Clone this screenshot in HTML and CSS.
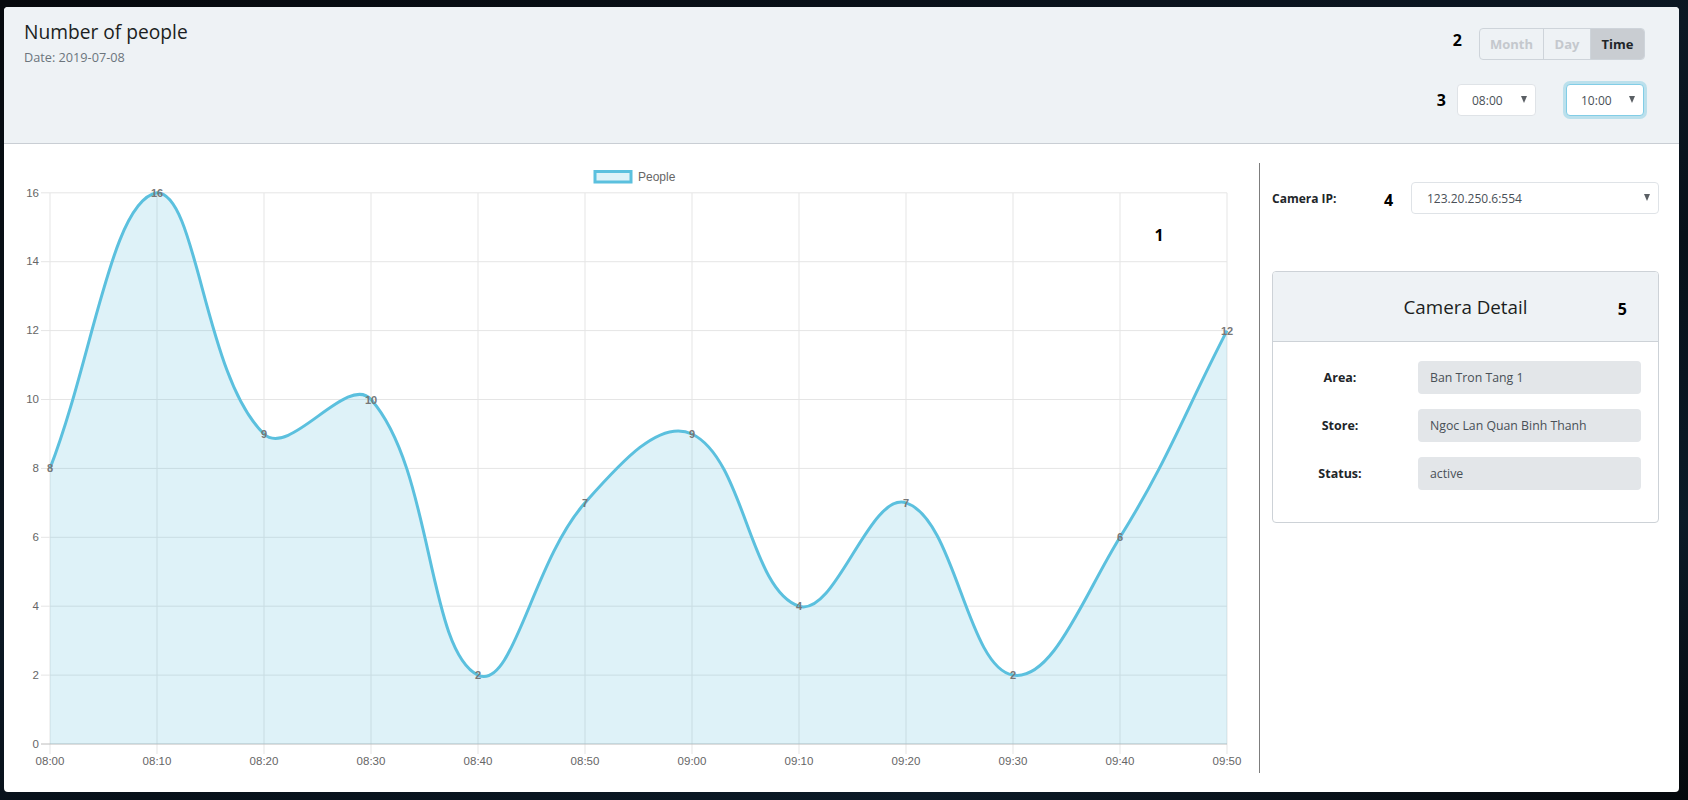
FILE: index.html
```html
<!DOCTYPE html>
<html lang="en">
<head>
<meta charset="utf-8">
<title>Number of people</title>
<link rel="stylesheet" href="styles.css">
</head>
<body>
<div class="card">
  <header class="card-header">
    <div class="title-block">
      <h1 class="title">Number of people</h1>
      <div class="date">Date: 2019-07-08</div>
    </div>
    <div class="controls">
      <div class="control-row">
        <span class="marker marker-2">2</span>
        <div class="btn-group">
          <span class="btn btn-month">Month</span>
          <span class="btn btn-day">Day</span>
          <span class="btn btn-time active">Time</span>
        </div>
      </div>
      <div class="control-row row-times">
        <span class="marker marker-3">3</span>
        <div class="select select-time">08:00<span class="caret"></span></div>
        <div class="select select-time select-focus">10:00<span class="caret"></span></div>
      </div>
    </div>
  </header>
  <div class="card-body">
    <div class="chart-col">
      <svg class="chart" width="1255" height="648" viewBox="0 0 1255 648">
        <g class="grid">
          <line x1="46" y1="48.8" x2="46" y2="610"/>
          <line x1="153" y1="48.8" x2="153" y2="610"/>
          <line x1="260" y1="48.8" x2="260" y2="610"/>
          <line x1="367" y1="48.8" x2="367" y2="610"/>
          <line x1="474" y1="48.8" x2="474" y2="610"/>
          <line x1="581" y1="48.8" x2="581" y2="610"/>
          <line x1="688" y1="48.8" x2="688" y2="610"/>
          <line x1="795" y1="48.8" x2="795" y2="610"/>
          <line x1="902" y1="48.8" x2="902" y2="610"/>
          <line x1="1009" y1="48.8" x2="1009" y2="610"/>
          <line x1="1116" y1="48.8" x2="1116" y2="610"/>
          <line x1="1223" y1="48.8" x2="1223" y2="610"/>
          <line x1="37" y1="531.1" x2="1223" y2="531.1"/>
          <line x1="37" y1="462.2" x2="1223" y2="462.2"/>
          <line x1="37" y1="393.3" x2="1223" y2="393.3"/>
          <line x1="37" y1="324.4" x2="1223" y2="324.4"/>
          <line x1="37" y1="255.5" x2="1223" y2="255.5"/>
          <line x1="37" y1="186.6" x2="1223" y2="186.6"/>
          <line x1="37" y1="117.7" x2="1223" y2="117.7"/>
          <line x1="37" y1="48.8" x2="1223" y2="48.8"/>
        </g>
        <line class="zero-line" x1="37" y1="600" x2="1223" y2="600"/>
        <g class="y-ticks">
          <text x="35" y="604">0</text>
          <text x="35" y="535">2</text>
          <text x="35" y="466">4</text>
          <text x="35" y="397">6</text>
          <text x="35" y="328">8</text>
          <text x="35" y="259">10</text>
          <text x="35" y="190">12</text>
          <text x="35" y="121">14</text>
          <text x="35" y="53">16</text>
        </g>
        <g class="x-ticks">
          <text x="46" y="621">08:00</text>
          <text x="153" y="621">08:10</text>
          <text x="260" y="621">08:20</text>
          <text x="367" y="621">08:30</text>
          <text x="474" y="621">08:40</text>
          <text x="581" y="621">08:50</text>
          <text x="688" y="621">09:00</text>
          <text x="795" y="621">09:10</text>
          <text x="902" y="621">09:20</text>
          <text x="1009" y="621">09:30</text>
          <text x="1116" y="621">09:40</text>
          <text x="1223" y="621">09:50</text>
        </g>
        <path class="area" d="M46,324.4 C88.8,214.16 107.76,56.07 153,48.8 C193.36,48.8 199.97,232.02 260,290 C285.57,314.7 343.42,228.93 367,255.5 C429.02,325.37 423.24,506.59 474,531.1 C508.84,547.93 528.42,418.09 581,358.85 C614,321.67 655,274.06 688,290 C740.58,315.39 745.63,446.32 795,462.2 C831.23,473.86 865.77,347.19 902,358.85 C951.37,374.75 962.99,523.69 1009,531.1 C1048.59,537.47 1079.32,452.35 1116,393.3 C1164.92,314.55 1180.2,269.28 1223,186.6 L1223,600 L46,600 Z"/>
        <path class="line" d="M46,324.4 C88.8,214.16 107.76,56.07 153,48.8 C193.36,48.8 199.97,232.02 260,290 C285.57,314.7 343.42,228.93 367,255.5 C429.02,325.37 423.24,506.59 474,531.1 C508.84,547.93 528.42,418.09 581,358.85 C614,321.67 655,274.06 688,290 C740.58,315.39 745.63,446.32 795,462.2 C831.23,473.86 865.77,347.19 902,358.85 C951.37,374.75 962.99,523.69 1009,531.1 C1048.59,537.47 1079.32,452.35 1116,393.3 C1164.92,314.55 1180.2,269.28 1223,186.6"/>
        <g class="data-labels">
          <text x="46" y="328.4">8</text>
          <text x="153" y="52.8">16</text>
          <text x="260" y="294">9</text>
          <text x="367" y="259.5">10</text>
          <text x="474" y="535.1">2</text>
          <text x="581" y="362.9">7</text>
          <text x="688" y="294">9</text>
          <text x="795" y="466.2">4</text>
          <text x="902" y="362.9">7</text>
          <text x="1009" y="535.1">2</text>
          <text x="1116" y="397.3">6</text>
          <text x="1223" y="190.6">12</text>
        </g>
        <g class="legend">
          <rect x="591" y="27.5" width="36" height="10.5"/>
          <text x="634" y="37">People</text>
        </g>
        <text class="marker-svg" x="1155" y="97">1</text>
      </svg>
    </div>
    <aside class="side-col">
      <div class="camera-row">
        <span class="camera-label">Camera IP:</span>
        <span class="marker marker-4">4</span>
        <div class="select select-camera">123.20.250.6:554<span class="caret"></span></div>
      </div>
      <section class="detail">
        <div class="detail-header">
          <h2 class="detail-title">Camera Detail</h2>
          <span class="marker marker-5">5</span>
        </div>
        <div class="detail-body">
          <div class="field">
            <span class="field-label">Area:</span>
            <div class="field-value">Ban Tron Tang 1</div>
          </div>
          <div class="field">
            <span class="field-label">Store:</span>
            <div class="field-value">Ngoc Lan Quan Binh Thanh</div>
          </div>
          <div class="field">
            <span class="field-label">Status:</span>
            <div class="field-value">active</div>
          </div>
        </div>
      </section>
    </aside>
  </div>
</div>
</body>
</html>
```
FILE: styles.css
```css
* { box-sizing: border-box; }

html, body { margin: 0; }

body {
  width: 1688px;
  height: 800px;
  overflow: hidden;
  padding: 7px 0 0 4px;
  background: linear-gradient(160deg, #06090d 0%, #0c1824 45%, #071019 60%, #0b1a27 80%, #05080c 100%);
  font-family: "Open Sans", "Noto Sans", sans-serif;
  color: #212529;
}

.card {
  width: 1675px;
  height: 785px;
  background: #fff;
  border-radius: 4px;
  overflow: hidden;
  display: flex;
  flex-direction: column;
}

/* ---------- header ---------- */
.card-header {
  height: 137px;
  flex: none;
  background: #eef2f5;
  border-bottom: 1px solid #c9ced4;
  display: flex;
  justify-content: space-between;
  padding: 13px 34px 0 20px;
}

.title {
  margin: 0;
  font-size: 19.2px;
  line-height: 24px;
  font-weight: 400;
  color: #1b1e21;
}

.date {
  margin-top: 4px;
  font-size: 12.7px;
  line-height: 18px;
  color: #6c757d;
}

.controls {
  margin-top: 8px;
  display: flex;
  flex-direction: column;
  align-items: flex-end;
}

.control-row {
  display: flex;
  align-items: center;
  height: 32px;
}

.row-times {
  margin-top: 24px;
  gap: 30px;
  margin-right: 1px;
}

.marker {
  font-weight: 700;
  font-size: 16px;
  line-height: 20px;
  color: #000;
}

.marker-2 { margin-right: 17px; margin-top: -8px; }
.marker-3 { margin-right: -19px; }

.btn-group {
  display: flex;
  height: 32px;
  border: 1px solid #ced4da;
  border-radius: 4px;
  overflow: hidden;
}

.btn {
  display: flex;
  align-items: center;
  justify-content: center;
  font-size: 13px;
  font-weight: 700;
  color: #c4c8cd;
}

.btn-month { width: 63px; }
.btn-day { width: 47px; border-left: 1px solid #ced4da; }
.btn-time { width: 54px; border-left: 1px solid #ced4da; }

.btn.active {
  background: #c9cdd2;
  color: #212529;
}

.select {
  display: flex;
  align-items: center;
  justify-content: space-between;
  height: 32px;
  background: #fff;
  border: 1px solid #dfe3e7;
  border-radius: 4px;
  padding: 0 8px 0 14px;
  font-size: 12px;
  color: #495057;
}

.select-time { width: 79px; }
.select-time + .select-time { width: 78px; }

.select-focus {
  border-color: #82cde6;
  box-shadow: 0 0 0 3px rgba(91, 192, 222, 0.35);
}

.caret {
  width: 0;
  height: 0;
  border-left: 3.5px solid transparent;
  border-right: 3.5px solid transparent;
  border-top: 7px solid #5a5f64;
  margin-top: -2px;
}

/* ---------- body ---------- */
.card-body {
  flex: 1;
  display: flex;
}

.chart-col {
  width: 1255px;
  flex: none;
}

.chart {
  display: block;
  font-family: "Liberation Sans", Arial, sans-serif;
}

.grid line {
  stroke: #e5e5e5;
  stroke-width: 1;
}

.zero-line {
  stroke: #bcbcbc;
  stroke-width: 1;
}

.y-ticks text {
  font-size: 11.5px;
  fill: #666;
  text-anchor: end;
}

.x-ticks text {
  font-size: 11.5px;
  fill: #666;
  text-anchor: middle;
}

.area {
  fill: rgba(91, 192, 222, 0.2);
  stroke: none;
}

.line {
  fill: none;
  stroke: #5bc0de;
  stroke-width: 3;
}

.data-labels text {
  font-size: 11px;
  font-weight: 700;
  fill: #777;
  text-anchor: middle;
}

.legend rect {
  fill: rgba(91, 192, 222, 0.2);
  stroke: #5bc0de;
  stroke-width: 3;
}

.legend text {
  font-size: 12px;
  fill: #666;
}

.marker-svg {
  font-family: "Open Sans", "Noto Sans", sans-serif;
  font-size: 16px;
  font-weight: 700;
  fill: #000;
  text-anchor: middle;
}

/* ---------- side column ---------- */
.side-col {
  width: 420px;
  flex: none;
  margin: 19px 0;
  border-left: 1px solid #7d7d7d;
  padding: 19px 20px 0 12px;
}

.camera-row {
  display: flex;
  align-items: center;
  height: 32px;
}

.camera-label {
  width: 112px;
  font-size: 12px;
  font-weight: 700;
  color: #212529;
}

.marker-4 {
  width: 27px;
  margin-top: 4px;
}

.select-camera {
  flex: 1;
  padding-left: 15px;
}

.detail {
  margin-top: 57px;
  border: 1px solid #cdd2d7;
  border-radius: 4px;
  overflow: hidden;
}

.detail-header {
  position: relative;
  height: 70px;
  background: #eef2f5;
  border-bottom: 1px solid #cdd2d7;
  display: flex;
  align-items: center;
  justify-content: center;
}

.detail-title {
  margin: 0;
  font-size: 18.8px;
  font-weight: 400;
  color: #1b1e21;
}

.marker-5 {
  position: absolute;
  right: 31px;
  top: 27px;
}

.detail-body {
  padding: 19px 17px 32px 20px;
  display: flex;
  flex-direction: column;
  gap: 15px;
}

.field {
  display: flex;
  align-items: center;
  height: 33px;
}

.field-label {
  width: 94px;
  margin-right: 31px;
  text-align: center;
  font-size: 12.5px;
  font-weight: 700;
  color: #212529;
}

.field-value {
  width: 223px;
  height: 33px;
  display: flex;
  align-items: center;
  padding-left: 12px;
  background: #e3e6e9;
  border-radius: 4px;
  font-size: 12.3px;
  color: #495057;
}
```
